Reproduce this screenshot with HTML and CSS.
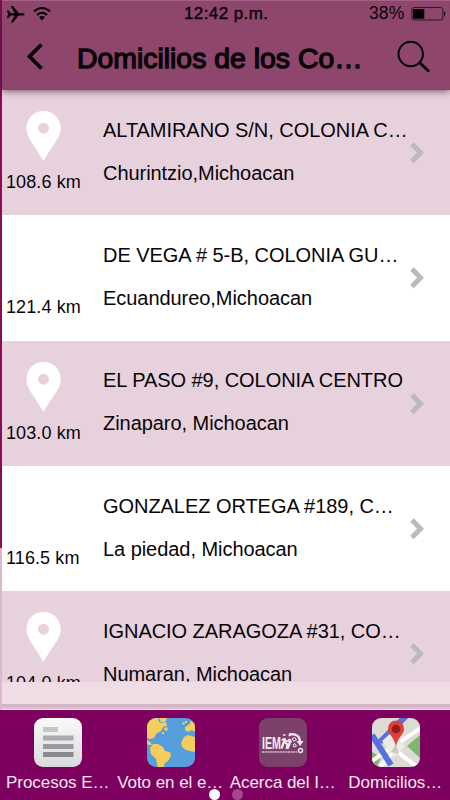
FILE: index.html
```html
<!DOCTYPE html>
<html lang="es">
<head>
<meta charset="utf-8">
<title>Domicilios</title>
<link rel="stylesheet" href="styles.css">
</head>
<body>
<svg width="0" height="0" class="defs">
  <symbol id="pin" viewBox="0 0 36 51"><path fill="#fff" fill-rule="evenodd" d="M17.500 0C7.500 0 .500 7.500.500 17.500C.500 26 7 32 17.500 50C28 32 34.700 26 34.700 17.500C34.700 7.500 27.500 0 17.500 0ZM17.500 11.700a5.500 5.500 0 1 1 0 11a5.500 5.500 0 0 1 0-11Z"/></symbol>
  <symbol id="next" viewBox="0 0 16 24"><path d="M3 3l8.500 8.700-8.500 8.700" fill="none" stroke="#bbb9ba" stroke-width="5"/></symbol>
</svg>
<div class="app">
  <header class="header">
    <div class="status">
      <svg class="signals" width="50" height="22" viewBox="0 0 50 22">
        <path d="M5 7.500h1.600l2.200 2.700h4L8.800 3h2.100l5.800 7.200h4.300c2.200.2 2.200 2 0 2.200h-4.300l-5.800 7.200H8.800l4-7.200h-4l-2.200 2.700H5l1-3.800z"/>
        <path d="M32 8.500q8-7 16 0M35 12q5-4.400 10 0" fill="none" stroke="#000" stroke-width="1.900"/>
        <path d="M37 14.300q3-2.500 6 0l-3 3.200z"/>
      </svg>
      <span class="time">12:42 p.m.</span>
      <span class="charge">38%</span>
      <svg class="battery" width="36" height="16" viewBox="0 0 36 16"><rect x=".8" y="1.500" width="31" height="12.500" rx="2" fill="none" stroke="#301727"/><path d="M2 3h11.300v9.700H2zM33 5q2.500 2.700 0 5.500z"/></svg>
    </div>
    <div class="bar">
      <svg class="back" width="22" height="32" viewBox="0 0 22 32"><path d="M18.500 3.500L6.500 15.500l12 12" fill="none" stroke="#000" stroke-width="3.800"/></svg>
      <h1 class="title">Domicilios de los Co…</h1>
      <svg class="search" width="36" height="36" viewBox="0 0 36 36"><circle cx="14.700" cy="15" r="12.200" fill="none" stroke="#000" stroke-width="2"/><path d="M23.500 23.500l9.500 9" stroke="#000" stroke-width="2.800"/></svg>
    </div>
  </header>
  <main class="list">
    <article class="row tinted">
      <div class="place"><svg class="pin"><use href="#pin"/></svg><span class="km">108.6 km</span></div>
      <div class="info"><p class="street">ALTAMIRANO S/N, COLONIA C…</p><p class="city">Churintzio,Michoacan</p></div>
      <svg class="next"><use href="#next"/></svg>
    </article>
    <article class="row">
      <div class="place"><svg class="pin"><use href="#pin"/></svg><span class="km">121.4 km</span></div>
      <div class="info"><p class="street">DE VEGA # 5-B, COLONIA GU…</p><p class="city">Ecuandureo,Michoacan</p></div>
      <svg class="next"><use href="#next"/></svg>
    </article>
    <article class="row tinted">
      <div class="place"><svg class="pin"><use href="#pin"/></svg><span class="km">103.0 km</span></div>
      <div class="info"><p class="street">EL PASO #9, COLONIA CENTRO</p><p class="city">Zinaparo, Michoacan</p></div>
      <svg class="next"><use href="#next"/></svg>
    </article>
    <article class="row">
      <div class="place"><svg class="pin"><use href="#pin"/></svg><span class="km">116.5 km</span></div>
      <div class="info"><p class="street">GONZALEZ ORTEGA #189, C…</p><p class="city">La piedad, Michoacan</p></div>
      <svg class="next"><use href="#next"/></svg>
    </article>
    <article class="row tinted">
      <div class="place"><svg class="pin"><use href="#pin"/></svg><span class="km">104.0 km</span></div>
      <div class="info"><p class="street">IGNACIO ZARAGOZA #31, CO…</p><p class="city">Numaran, Michoacan</p></div>
      <svg class="next"><use href="#next"/></svg>
    </article>
  </main>
  <div class="footer-space"></div>
  <div class="divider"></div>
  <nav class="tabs">
    <div class="tab">
      <svg class="icon" viewBox="0 0 48 50"><defs><linearGradient id="paper" x2="0" y2="1"><stop stop-color="#fafafa"/><stop offset="1" stop-color="#d9dadd"/></linearGradient></defs><rect width="48" height="49" rx="9" fill="url(#paper)"/><path fill="#c5c6c8" d="M9 9h15v5H9z"/><path fill="#a9abad" d="M9 17.500h30.500v5H9z"/><path fill="#999b9e" d="M9 26h30.500v5H9z"/><path fill="#898b8f" d="M9 34h30.500v5H9z"/></svg>
      <span>Procesos E…</span>
    </div>
    <div class="tab">
      <svg class="icon" viewBox="0 0 48 50"><defs><clipPath id="round"><rect width="48" height="49" rx="9"/></clipPath></defs><g clip-path="url(#round)"><path fill="#559edb" d="M0 0h48v49H0z"/><g fill="#f4cd5c"><path d="M0 0h11l1 4 3 1 4-1 1 4-4 1-2 4-5 3-2 4-4 1-3-1z"/><path d="M12 0h8l-2 4h-4zM17 10l3-1 1 3-3 1zM15 14l2 0v2h-2z"/><path d="M0 22l3 2 2 3-3 0-2-1zM3 30l3-4 5 0 5 3 2 4 5 1 1 4-3 5-3 2-2 6h-5l-2-10-5-5z"/><path d="M37 19l4-2 7 2v15l-5-1-4-1-4-3-1-4zM38 9l5-3 0-3 5 2v9l-3-2-4 2-3-2zM35 5l2-1 1 2-2 1zM38 3l2 0 0 2h-2z"/></g></g></svg>
      <span>Voto en el e…</span>
    </div>
    <div class="tab">
      <svg class="icon" viewBox="0 0 48 50"><rect width="48" height="49" rx="9" fill="#7b416b"/><text class="logo" x="3" y="31" textLength="19" lengthAdjust="spacingAndGlyphs">IEM</text><g fill="none" stroke="#f3eaf0"><path stroke-width="2.200" d="M25.500 20l-1 5-2 5.500M25.500 24l3 2.500-1 4.500M30.500 21v5l-2 4.500"/><path stroke-width="1.500" d="M24 17h2.500M29.500 17.500h2M22.500 22l3-1 2 2.500 3-2 2 3"/><path stroke-width="2.400" d="M30 16.500c8-1 11 2 11 8"/><path d="M33 20.500l3-1 1.500 2.500-3 1zM34 27l2-1.500 1.500 2.500-2.500 1z"/></g><path fill="#f3eaf0" d="M37.500 23h7L41 28z"/><circle cx="41.500" cy="32.500" r="2" fill="none" stroke="#eee4eb" stroke-width="1.400"/><path d="M3 34h35" fill="none" stroke="#d5bfce" stroke-width="1.400" stroke-dasharray="2 .6"/></svg>
      <span>Acerca del I…</span>
    </div>
    <div class="tab">
      <svg class="icon" viewBox="0 0 48 50"><g clip-path="url(#round)"><path fill="#dddbd6" d="M0 0h48v49H0z"/><path fill="#7fb66b" d="M48 17v23L35 28zM0 34l9 5-4 10H0z"/><path d="M-3 45L50 9M8 49l15-17 25 19" fill="none" stroke="#fff" stroke-width="4"/><path d="M0 17l19 30M8 24L36-4" fill="none" stroke="#586fe0" stroke-width="6"/><path fill="#eeece6" d="M10 23l10-9 13 14-11 11z"/><path fill="#c9c8c2" d="M24 26l-5 8 8 2z"/><path fill="#dc4237" d="M24 28C21 17 16 17 16 10.500a8 8 0 0 1 16 0C32 17 27 17 24 28z"/><circle cx="24" cy="11" r="4.300" fill="#931d1c"/></g></svg>
      <span>Domicilios…</span>
    </div>
    <i class="dot on"></i><i class="dot"></i>
  </nav>
</div>
</body>
</html>
```
FILE: styles.css
```css
* { box-sizing: border-box; }
body { margin: 0; width: 450px; height: 800px; overflow: hidden; font-family: "Liberation Sans", Arial, sans-serif; color: #080508; }
.defs { position: absolute; }
svg { display: block; flex: none; }
.app { display: flex; flex-direction: column; height: 800px; padding-left: 2px; background: linear-gradient(#8b0b57 0 548px, #dcb8cc 548px 710px, #7e005e 710px); }
.header { position: relative; z-index: 1; flex: none; height: 90px; background: #8e466d; border-top: 1px solid #a26085; box-shadow: 0 1px 7px #35152ab0; border-bottom: 1px solid #74505f; }
.status { display: flex; align-items: center; height: 25px; font-size: 17px; line-height: 25px; white-space: nowrap; }
.signals { width: 50px; }
.time { margin-left: 132px; width: 86px; letter-spacing: .4px; -webkit-text-stroke: .4px #080508; }
.charge { margin-left: 99px; width: 42px; font-size: 17.5px; letter-spacing: .1px; }
.battery { flex: none; }
.bar { display: flex; align-items: center; height: 62px; }
.back { margin: 0 0 0 21px; }
.title { margin: 1px 0 0 32px; width: 296px; font-size: 28.4px; font-weight: 400; line-height: 40px; white-space: nowrap; -webkit-text-stroke: 1.3px #080508; }
.search { margin-left: 23px; }
.list { flex: none; height: 592px; overflow: hidden; }
.row { display: flex; height: 125.25px; background: #fff; white-space: nowrap; }
.tinted { background: #e7d1dd; }
.place { width: 101px; padding: 21px 0 0 4px; }
.pin { width: 36px; height: 51px; margin-left: 20px; }
.km { display: block; margin-top: 9px; font-size: 18px; line-height: 22px; letter-spacing: .1px; }
.info { width: 304px; padding-top: 27.8px; }
.street, .city { margin: 0; font-size: 20px; line-height: 24px; letter-spacing: -.05px; }
.city { margin-top: 19px; }
.next { width: 16px; height: 24px; margin: 51px 0 0 2px; }
.footer-space { flex: none; height: 22px; background: #f0dce5; }
.divider { flex: none; height: 6px; background: linear-gradient(#d4b5c4 0 3px, #dcc0ce 3px 5px, #e9dfed 5px); }
.tabs { position: relative; display: flex; flex: 1; background: #7e005e; margin-left: -2px; color: #f3e7f0; font-size: 17px; }
.tab { display: flex; flex-direction: column; align-items: center; width: 112.5px; padding-top: 8px; white-space: nowrap; }
.icon { width: 48px; height: 50px; margin-left: 4px; }
.tab span { margin: 5px 0 0 3px; line-height: 20px; letter-spacing: -.05px; }
.logo { font: bold 17px "Liberation Sans", sans-serif; fill: #f5edf3; }
.dot { position: absolute; left: 232px; top: 79px; width: 11px; height: 11px; border-radius: 50%; background: #a5488b; }
.dot.on { left: 209px; background: #fff; }
```
